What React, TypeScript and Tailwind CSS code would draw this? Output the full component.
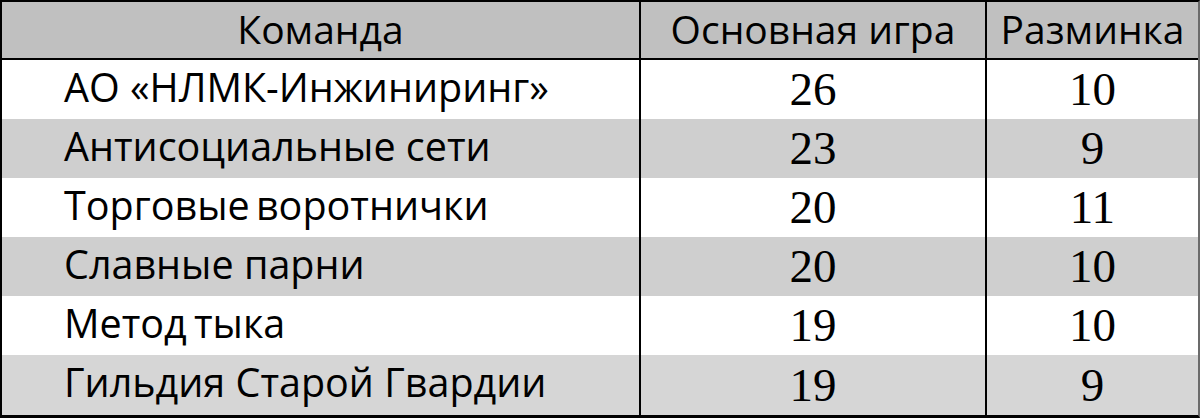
import React from "react";

const rows = [
  { name: "АО «НЛМК-Инжиниринг»", main: "26", warm: "10", bg: "bg-white", w: "" },
  { name: "Антисоциальные сети", main: "23", warm: "9", bg: "bg-[#cfcfcf]", w: "" },
  { name: "Торговые воротнички", main: "20", warm: "11", bg: "bg-white", w: "[word-spacing:-4px]" },
  { name: "Славные парни", main: "20", warm: "10", bg: "bg-[#cfcfcf]", w: "" },
  { name: "Метод тыка", main: "19", warm: "10", bg: "bg-white", w: "font-medium [word-spacing:-3px]" },
  { name: "Гильдия Старой Гвардии", main: "19", warm: "9", bg: "bg-[#d6d6d6]", w: "" },
];

const sans = "font-['Open_Sans','Noto_Sans',sans-serif]";
const serif = "font-['Liberation_Serif','Times_New_Roman',serif]";

export default function App() {
  return (
    <div className="w-[1200px] h-[418px] bg-white overflow-hidden">
      <div className="w-[1200px] border-l-2 border-t-2 border-r-2 border-b-[3px] border-black border-r-[#6b6b6b] text-black">
        <div className={`flex h-[58px] border-b-2 border-black bg-[#c0c0c0] ${sans} text-[39px] leading-none`}>
          <div className="w-[637px] flex items-center justify-center pb-[4px]">Команда</div>
          <div className="w-[346px] border-l-2 border-black flex items-center justify-center pb-[4px]">Основная игра</div>
          <div className="flex-1 border-l-2 border-black flex items-center justify-center pb-[4px]">Разминка</div>
        </div>
        {rows.map((r, i) => (
          <div key={i} className={`flex ${i === 5 ? "h-[60px]" : "h-[59px]"} ${r.bg}`}>
            <div className={`w-[637px] flex items-center pl-[62px] pb-[4px] ${sans} ${r.w} text-[39.5px] leading-none`}>{r.name}</div>
            <div className={`w-[346px] border-l-2 border-black flex items-center justify-center ${serif} text-[47px] leading-none`}>{r.main}</div>
            <div className={`flex-1 border-l-2 border-black flex items-center justify-center ${serif} text-[47px] leading-none`}>{r.warm}</div>
          </div>
        ))}
      </div>
    </div>
  );
}
